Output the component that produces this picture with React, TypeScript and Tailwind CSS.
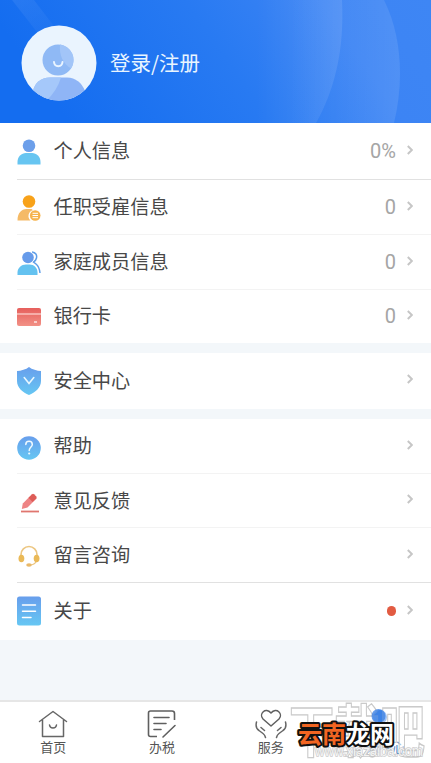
import React from "react";

const Banner = () => (
  <svg className="absolute inset-0" width="431" height="123" viewBox="0 0 431 123">
    <defs>
      <linearGradient id="bannerBg" x1="0" y1="0.2" x2="1" y2="0">
        <stop offset="0" stopColor="#146df0" />
        <stop offset="0.45" stopColor="#287af2" />
        <stop offset="0.75" stopColor="#3c84f4" />
        <stop offset="1" stopColor="#3e86f4" />
      </linearGradient>
      <linearGradient id="bannerArc" x1="0" y1="0" x2="1" y2="0">
        <stop offset="0.5" stopColor="#fff" stopOpacity="0" />
        <stop offset="1" stopColor="#fff" stopOpacity="0.1" />
      </linearGradient>
      <linearGradient id="bannerRay" x1="0" y1="0" x2="1" y2="1">
        <stop offset="0" stopColor="#fff" stopOpacity="0.07" />
        <stop offset="1" stopColor="#fff" stopOpacity="0.02" />
      </linearGradient>
    </defs>
    <rect width="431" height="123" fill="url(#bannerBg)" />
    <path d="M12 0H34L60 34L40 36Z" fill="url(#bannerRay)" />
    <path d="M180 0H384C402 36 404 82 394 123H180Z" fill="url(#bannerArc)" />
    <path d="M170 0H342C344 42 338 84 316 123H170Z" fill="url(#bannerArc)" />
  </svg>
);

const Avatar = () => (
  <svg width="76" height="76" viewBox="0 0 76 76">
    <defs>
      <clipPath id="avatarClip">
        <circle cx="38" cy="38" r="37.5" />
      </clipPath>
    </defs>
    <circle cx="38" cy="38" r="37.5" fill="#eaf4fe" />
    <g clipPath="url(#avatarClip)">
      <circle cx="37" cy="35" r="15.5" fill="#8fb9f5" />
      <path d="M39 19.6A15.5 15.5 0 0 1 50 43.5C42 39 38 30 39 19.6Z" fill="#a2c5f8" />
      <path d="M12 76V66Q15 53 29 52.500H46Q59 53 64 66V76Z" fill="#8fb5f6" />
      <path d="M12 76V66Q15 53 29 52.500H40Q36 66 25 76Z" fill="#a5c8fa" />
    </g>
    <path d="M33 37C33.500 42.500 41 42.500 41.500 37" fill="none" stroke="#e9f4ff" strokeWidth="2" strokeLinecap="round" />
  </svg>
);

const Gradients = () => (
  <svg className="absolute" width="0" height="0">
    <defs>
      <linearGradient id="blue" x1="0" y1="0" x2="0" y2="1">
        <stop offset="0" stopColor="#689eec" />
        <stop offset="1" stopColor="#66c7f3" />
      </linearGradient>
      <linearGradient id="red" x1="0" y1="0" x2="0" y2="1">
        <stop offset="0" stopColor="#e65f5c" />
        <stop offset="1" stopColor="#f29186" />
      </linearGradient>
    </defs>
  </svg>
);

const PersonIcon = () => (
  <svg width="24" height="30" viewBox="0 0 24 30">
    <circle cx="12" cy="9.800" r="6.300" fill="#6c9fea" />
    <path d="M.5 28.500V26C.5 20.500 4.500 17 9 17H15C19.500 17 23.500 20.500 23.500 26V28.500Z" fill="#67c5f1" />
  </svg>
);

const JobIcon = () => (
  <svg width="24" height="30" viewBox="0 0 24 30">
    <circle cx="12" cy="9.500" r="6.300" fill="#f8a21a" />
    <path d="M.5 28.500C.5 21 4.500 17 9.500 17H14.500L16 18.200A6 6 0 0 0 13.500 28.500Z" fill="#f5ba66" />
    <circle cx="18.200" cy="23.500" r="5.300" fill="#f6b34c" />
    <path d="M15.500 21.300H21M15.500 23.500H21M15.500 25.700H21" stroke="#fff" strokeWidth="1" />
  </svg>
);

const FamilyIcon = () => (
  <svg width="24" height="30" viewBox="0 0 24 30">
    <path d="M15 5Q20.500 6 19.500 11Q19 13.500 16.500 15L19 17Q22.500 20 23 26" fill="none" stroke="#5e9ee8" strokeWidth="1.500" />
    <circle cx="11" cy="10.500" r="6.500" fill="#fff" />
    <circle cx="11" cy="10.500" r="5.800" fill="#669bea" />
    <path d="M.5 28V25.500C.5 21 4.500 17.500 9 17.500H12.500C17 17.500 20.500 21 20.500 25.500V28Z" fill="#64c2f0" />
  </svg>
);

const CardIcon = () => (
  <svg width="24" height="30" viewBox="0 0 24 30">
    <rect y="7" width="24" height="18" rx="2" fill="url(#red)" />
    <path d="M0 13H24" stroke="#fdd8d3" strokeWidth="1.200" />
    <path d="M17 21H20" stroke="#fff" strokeWidth="1.200" />
  </svg>
);

const ShieldIcon = () => (
  <svg width="24" height="30" viewBox="0 0 24 30">
    <path d="M12 1C15 3.500 20 4.800 24 5V15C24 22 18 26.500 12 29C6 26.500 0 22 0 15V5C4 4.800 9 3.500 12 1Z" fill="url(#blue)" />
    <path d="M7.200 11.500L12 17.500L16.800 11.500" fill="none" stroke="#e8f7ff" strokeWidth="1.600" strokeLinecap="round" />
  </svg>
);

const HelpIcon = () => (
  <svg width="24" height="30" viewBox="0 0 24 30">
    <circle cx="12" cy="17" r="11.800" fill="url(#blue)" />
    <path d="M8.800 13.500C8.800 9.300 15.300 9.300 15.300 13.500C15.300 16 12.200 16 12.200 19.500" fill="none" stroke="#effaff" strokeWidth="1.500" strokeLinecap="round" />
    <circle cx="12.200" cy="22.500" r="1.100" fill="#effaff" />
  </svg>
);

const PencilIcon = () => (
  <svg width="24" height="30" viewBox="0 0 24 30">
    <path d="M4.800 23L5.800 17.500L15 8.300L19.500 12.500L10.500 21.500Z" fill="#ee8485" />
    <path d="M11.500 11.800L15.200 8.200Q16 7.500 17 8.300L19.300 10.500Q20 11.500 19.300 12.500L15.600 16Z" fill="#dd5c57" />
    <path d="M4 25.500H22" stroke="#e0766f" strokeWidth="1.800" />
  </svg>
);

const HeadsetIcon = () => (
  <svg width="24" height="30" viewBox="0 0 24 30">
    <path d="M4 16V14.500A8 8 0 0 1 20 14.500V16" fill="none" stroke="#ecc681" strokeWidth="1.600" />
    <path d="M20 20Q18.500 24.500 13.500 25" fill="none" stroke="#ecc681" strokeWidth="1.200" />
    <ellipse cx="4.400" cy="18.500" rx="2.900" ry="3.800" fill="#eab957" />
    <ellipse cx="19.600" cy="18.500" rx="2.900" ry="3.800" fill="#eab957" />
    <ellipse cx="12" cy="25" rx="2.800" ry="1.700" fill="#e9b869" />
  </svg>
);

const AboutIcon = () => (
  <svg width="24" height="30" viewBox="0 0 24 30">
    <rect y=".5" width="24" height="29" rx="2.500" fill="url(#blue)" />
    <path d="M5.500 9H18.500M5.500 15.200H18.500M5.500 21.500H14" stroke="#fff" strokeWidth="1.500" strokeLinecap="round" />
  </svg>
);

const Chevron = () => (
  <svg className="-mt-[3px]" width="6" height="10" viewBox="0 0 6 10">
    <path d="M.8 1L4.900 5L.8 9" fill="none" stroke="#c6c6c6" strokeWidth="2" />
  </svg>
);

const groups = [
  [
    { name: "个人信息", icon: PersonIcon, value: "0%", size: "h-[57px]", line: "border-[#e1e1e1]" },
    { name: "任职受雇信息", icon: JobIcon, value: "0", size: "h-[55px]", line: "border-[#f3f3f3]" },
    { name: "家庭成员信息", icon: FamilyIcon, value: "0", size: "h-[55px]", line: "border-[#f3f3f3]" },
    { name: "银行卡", icon: CardIcon, value: "0", size: "h-[53px]", line: "border-transparent" },
  ],
  [{ name: "安全中心", icon: ShieldIcon, size: "h-14", line: "border-transparent" }],
  [
    { name: "帮助", icon: HelpIcon, size: "h-[55px]", line: "border-[#f3f3f3]" },
    { name: "意见反馈", icon: PencilIcon, size: "h-[54px]", line: "border-[#f3f3f3]" },
    { name: "留言咨询", icon: HeadsetIcon, size: "h-[55px]", line: "border-[#e1e1e1]" },
    { name: "关于", icon: AboutIcon, dot: true, size: "h-[57px]", line: "border-transparent" },
  ],
];

type RowProps = {
  name: string;
  icon: React.FC;
  size: string;
  line: string;
  value?: string;
  dot?: boolean;
};

const Row: React.FC<RowProps> = ({ name, icon: Icon, size, line, value, dot }) => (
  <div className={`ml-[17px] flex items-center border-b pr-[18px] ${size} ${line}`}>
    <Icon />
    <span className="-mt-[2px] ml-[12.5px] flex-1 text-[19.2px] leading-7 text-[#484848]">{name}</span>
    {value && (
      <span className="mr-[11px] font-['Roboto','Noto_Sans_CJK_SC',sans-serif] text-[20px] leading-7 text-[#a5a5a5]">
        {value}
      </span>
    )}
    {dot && <span className="mr-[11px] h-[10px] w-[9px] rounded-full bg-[#e25b42]" />}
    <Chevron />
  </div>
);

const HomeTab = () => (
  <svg width="32" height="30" viewBox="0 0 32 30">
    <path d="M2.500 12.500L16 2.500L29.500 12.500M5.500 11V27.500H26.500V11" fill="none" stroke="#666" strokeWidth="1.500" strokeLinejoin="round" strokeLinecap="round" />
    <path d="M12.500 16C13 20 19 20 19.500 16" fill="none" stroke="#666" strokeWidth="1.500" strokeLinecap="round" />
  </svg>
);

const TaxTab = () => (
  <svg width="32" height="30" viewBox="0 0 32 30">
    <path d="M28.500 11V4.500Q28.500 2 26 2H4.500Q2.500 2 2.500 4V25.500Q2.500 27.500 4.500 27.500H11" fill="none" stroke="#5f5f5f" strokeWidth="1.600" />
    <path d="M8 8.500H23M8 14.500H20M8 20.500H15M17 28L29 16.500" fill="none" stroke="#5f5f5f" strokeWidth="1.600" strokeLinecap="round" />
  </svg>
);

const ServiceTab = () => (
  <svg width="32" height="30" viewBox="0 0 32 30">
    <path d="M16 17L8 10C3.500 5 10.500 -2.500 16 4C21.500 -2.500 28.500 5 24 10Z" fill="none" stroke="#5f5f5f" strokeWidth="1.500" strokeLinejoin="round" />
    <path d="M1.500 13Q0 19 4 21.500L8 24.500Q10 26 10.500 28.500M6 18.500L9.500 21.500M30.500 13Q32 19 28 21.500L24 24.500Q22 26 21.500 28.500M26 18.500L22.500 21.500" fill="none" stroke="#666" strokeWidth="1.500" strokeLinecap="round" />
  </svg>
);

const MineTab = () => (
  <svg width="32" height="30" viewBox="0 0 32 30">
    <circle cx="16" cy="8" r="7" fill="#3e83e6" />
    <path d="M3 28Q4 17 13 17H19Q28 17 29 28Z" fill="#3e83e6" />
  </svg>
);

const tabs = [
  { name: "首页", icon: HomeTab, color: "text-[#555]" },
  { name: "办税", icon: TaxTab, color: "text-[#555]" },
  { name: "服务", icon: ServiceTab, color: "text-[#555]" },
  { name: "个人中心", icon: MineTab, color: "text-[#4a83c4]" },
];

// site marks laid over the right end of the tab bar
const Watermark = () => (
  <svg className="pointer-events-none absolute bottom-0 right-0" width="146" height="68" viewBox="0 0 146 68">
    <g fontFamily="Noto Sans CJK SC, sans-serif" fontWeight="bold">
      <text x="4" y="57" fontSize="57" textLength="136" lengthAdjust="spacingAndGlyphs" fill="#fff" fillOpacity="0.5" stroke="#cacaca" strokeWidth="1.300">
        下载吧
      </text>
      <text x="30" y="61" fontFamily="Liberation Sans, sans-serif" fontWeight="normal" fontSize="14" textLength="108" lengthAdjust="spacingAndGlyphs" fill="#fff" fillOpacity="0.8" stroke="#bababa" strokeOpacity="0.75" strokeWidth="1.500" paintOrder="stroke">
        www.xiazaiba.com
      </text>
      <circle cx="93.5" cy="21" r="7" fill="#3e83e6" fillOpacity="0.8" />
      <g fontSize="24" strokeLinejoin="round" paintOrder="stroke">
        <text x="13" y="48" fill="#f26522" stroke="#111" strokeWidth="4">云南</text>
        <text x="61" y="48" fill="#fff" stroke="#111" strokeWidth="4">龙网</text>
      </g>
    </g>
  </svg>
);

const App: React.FC = () => {
  return (
    <div className="relative flex h-[763px] w-[431px] flex-col overflow-hidden bg-[#f3f7fa] font-['Noto_Sans_CJK_SC',sans-serif]">
      <Gradients />
      <header className="relative h-[123px] shrink-0">
        <Banner />
        <div className="relative flex items-center pl-[21px] pt-[25px]">
          <Avatar />
          <span className="-mt-[2px] ml-[13px] text-[20.5px] leading-8 text-[#e9f5ff]">登录/注册</span>
        </div>
      </header>

      <main className="flex flex-1 flex-col gap-[10px]">
        {groups.map((rows, i) => (
          <section key={i} className="bg-white">
            {rows.map((row) => (
              <Row key={row.name} {...row} />
            ))}
          </section>
        ))}
      </main>

      <nav className="h-[63px] shrink-0 border-t-2 border-[#e6e6e6] bg-white pt-[7px]">
        <div className="-ml-px -mr-[3px] grid grid-cols-4">
          {tabs.map(({ name, icon: Icon, color }) => (
            <div key={name} className="flex flex-col items-center">
              <Icon />
              <span className={`-mt-px text-[13px] leading-[18px] ${color}`}>{name}</span>
            </div>
          ))}
        </div>
      </nav>
      <Watermark />
    </div>
  );
};

export default App;
